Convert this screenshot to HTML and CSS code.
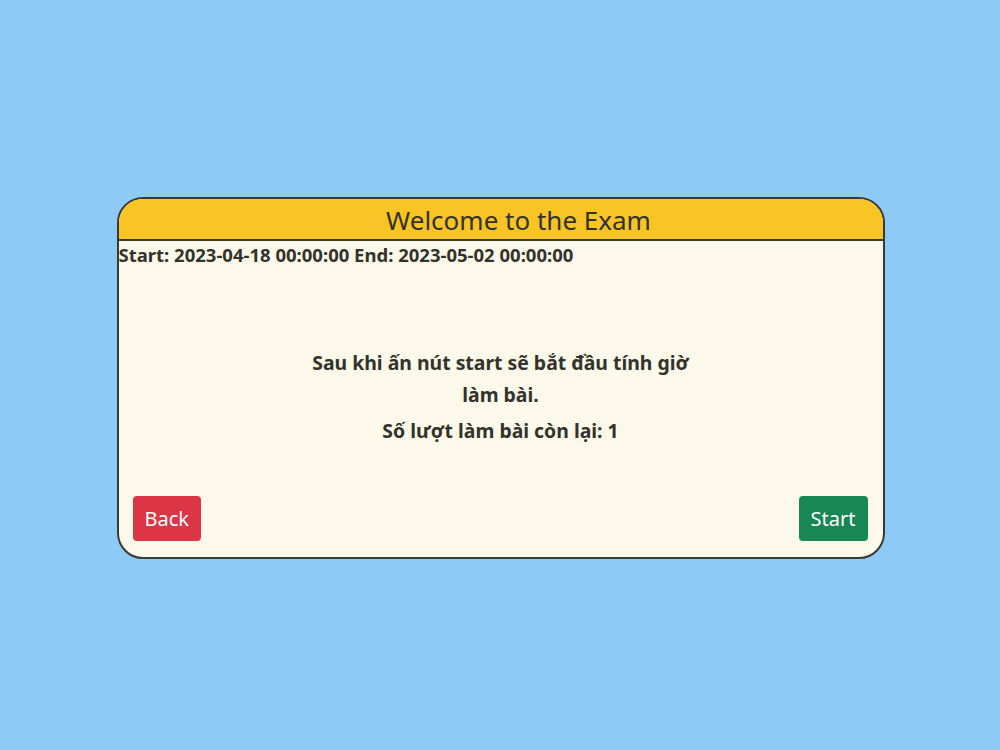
FILE: index.html
```html
<!DOCTYPE html>
<html lang="vi">
<head>
    <meta charset="UTF-8">
    <meta name="viewport" content="width=device-width, initial-scale=1.0">
    <title>Exam</title>
    <link rel="stylesheet" href="styles.css">
</head>
<body>
    <div class="page">
        <div class="exam-card">
            <div class="exam-header">Welcome to the Exam</div>
            <div class="exam-body">
                <div class="exam-time">Start: 2023-04-18 00:00:00 End: 2023-05-02 00:00:00</div>
                <div class="exam-message">
                    <p>Sau khi ấn nút start sẽ bắt đầu tính giờ làm bài.</p>
                    <p>Số lượt làm bài còn lại: 1</p>
                </div>
                <div class="exam-actions">
                    <button class="btn btn-back">Back</button>
                    <button class="btn btn-start">Start</button>
                </div>
            </div>
        </div>
    </div>
</body>
</html>
```

FILE: styles.css
```css
/* General reset */
body {
    margin: 0;
    padding: 0;
    font-family: "Noto Sans", "Open Sans", sans-serif;
    background-color: #8ecaf6;
    color: #33322b;
}

.page {
    height: 750px;
    display: flex;
    justify-content: center;
    align-items: flex-start;
}

/* Card */
.exam-card {
    box-sizing: border-box;
    margin-top: 197px;
    margin-left: 1px;
    width: 768px;
    border: 2px solid #3a3a35;
    border-radius: 26px;
    overflow: hidden;
    background-color: #fcf9ea;
}

.exam-header {
    background-color: #f9c424;
    border-bottom: 2px solid #3a3a35;
    height: 40px;
    line-height: 42px;
    text-align: center;
    font-size: 26px;
    padding-left: 36px;
}

.exam-time {
    font-weight: bold;
    font-size: 18.5px;
    line-height: 28px;
    white-space: nowrap;
}

/* Message */
.exam-message {
    width: 395px;
    margin: 0 auto;
    padding-top: 78px;
    text-align: center;
    font-weight: bold;
    font-size: 19.4px;
}

.exam-message p {
    margin: 0;
    line-height: 32px;
}

.exam-message p + p {
    margin-top: 4px;
}

/* Buttons */
.exam-actions {
    display: flex;
    justify-content: space-between;
    padding: 49px 15px 16px 14px;
}

.btn {
    border: none;
    border-radius: 4px;
    color: white;
    font-family: inherit;
    font-size: 20px;
    height: 45px;
    padding: 0 12px;
    cursor: pointer;
}

.btn-back {
    background-color: #dc3545;
}

.btn-start {
    background-color: #198754;
}
```
